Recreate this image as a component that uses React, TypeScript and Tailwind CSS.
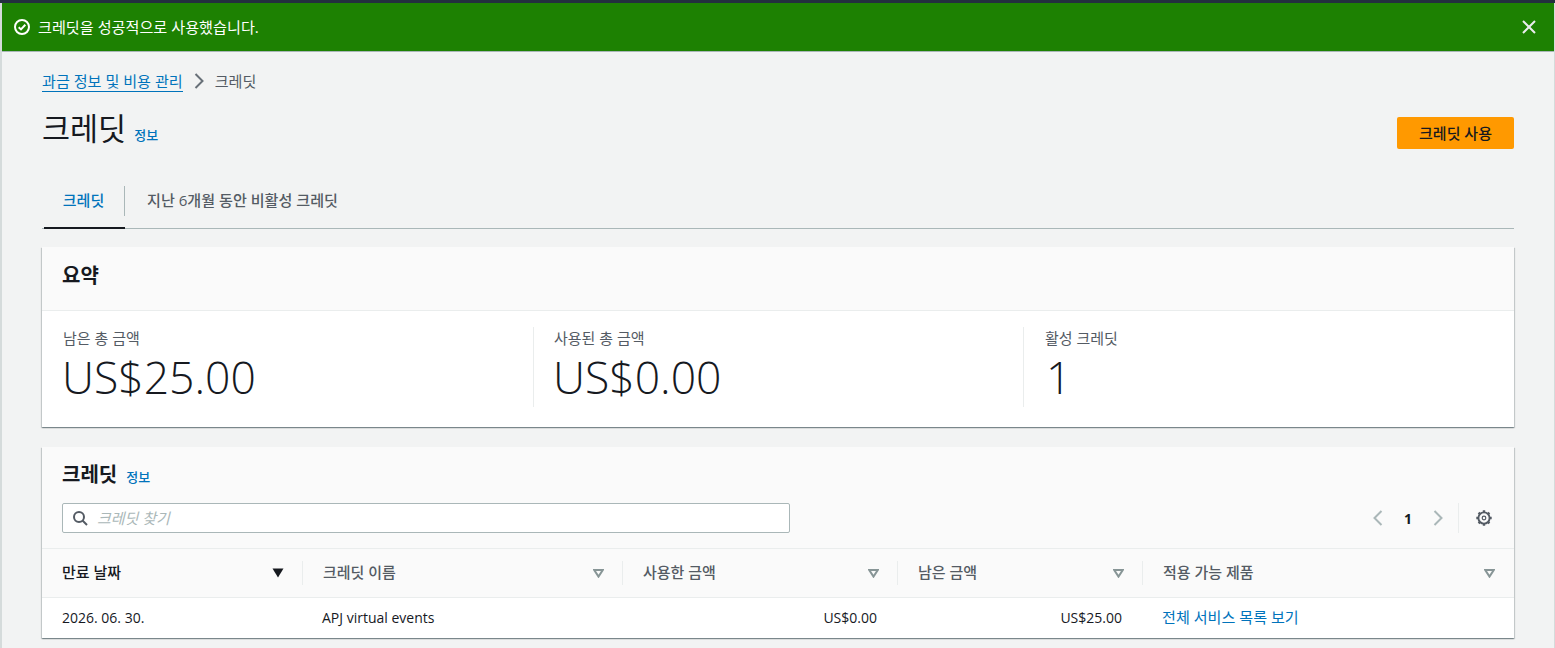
import React from "react";

const font = "font-['Open_Sans','Noto_Sans_CJK_KR',sans-serif]";

function SortIcon({ active }: { active?: boolean }) {
  if (active) {
    return (
      <svg width="12" height="10" viewBox="0 0 12 10" className="shrink-0">
        <path d="M0.5 0.5H11.5L6 9.5Z" fill="#16191f" />
      </svg>
    );
  }
  return (
    <svg width="11" height="9" viewBox="0 0 11 9" className="shrink-0">
      <path d="M1.2 1H9.8L5.5 7.6Z" fill="none" stroke="#879596" strokeWidth="2" />
    </svg>
  );
}

function Chevron({ dir, color }: { dir: "left" | "right"; color: string }) {
  return (
    <svg width="10" height="16" viewBox="0 0 10 16" fill="none" stroke={color} strokeWidth="2" className="shrink-0">
      <path d={dir === "right" ? "M1.5 1L8.5 8L1.5 15" : "M8.5 1L1.5 8L8.5 15"} />
    </svg>
  );
}

function Gear() {
  return (
    <svg width="16" height="16" viewBox="0 0 16 16" fill="none" stroke="#545b64" className="shrink-0 ml-[17px] mr-[2px]">
      <circle cx="8" cy="8" r="5.6" strokeWidth="1.9" />
      <circle cx="8" cy="8" r="1.8" strokeWidth="1.2" />
      <path
        d="M8 0.3V2.4M8 13.6V15.7M0.3 8H2.4M13.6 8H15.7M2.6 2.6L4 4M12 12L13.4 13.4M13.4 2.6L12 4M4 12L2.6 13.4"
        strokeWidth="2.4"
      />
    </svg>
  );
}

function Th({ label, w, active, last }: { label: string; w: string; active?: boolean; last?: boolean }) {
  return (
    <div className={`${w} h-full flex items-center relative pl-[20px] pr-[19px] ${last ? "grow" : ""}`}>
      <span className={`grow text-[15px] font-medium pb-[2px] ${active ? "text-[#16191f]" : "text-[#545b64]"}`}>{label}</span>
      <SortIcon active={active} />
      {!last && <span className="absolute right-0 top-[12px] h-[24px] w-px bg-[#eaeded]" />}
    </div>
  );
}

const cardShadow = "shadow-[0_1px_1px_0_rgba(0,28,36,0.3),1px_1px_1px_0_rgba(0,28,36,0.15),-1px_1px_1px_0_rgba(0,28,36,0.15)]";

export default function App() {
  return (
    <div className={`${font} w-[1555px] h-[648px] overflow-hidden bg-[#f2f3f3] flex flex-col text-[#16191f]`}>
      <div className="h-[3px] bg-[#232f3e] shrink-0" />
      <div className="flex grow min-h-0 border-l-2 border-l-[#d5dbdb] border-r border-r-[#d5dbdb]">
        <div className="grow min-w-0 flex flex-col">
          <div className="h-[49px] shrink-0 bg-[#1d8102] border-b border-b-[#aab7b8] flex items-center pl-[12px] pr-[17px] text-white">
            <svg width="16" height="16" viewBox="0 0 16 16" fill="none" stroke="#fff" strokeWidth="2" className="shrink-0">
              <circle cx="8" cy="8" r="7" />
              <path d="M4.7 8.2L7 10.4L11.3 5.8" />
            </svg>
            <span className="ml-[8px] grow text-[15.15px] leading-[20px]">크레딧을 성공적으로 사용했습니다.</span>
            <svg width="14" height="14" viewBox="0 0 14 14" fill="none" stroke="#eaeded" strokeWidth="2" className="shrink-0 mr-[1px]">
              <path d="M1 1L13 13M13 1L1 13" />
            </svg>
          </div>

          <div className="pl-[40px] pr-[40px] grow min-h-0 flex flex-col">
            <div className="flex items-center h-[20px] mt-[19px] text-[15.1px]">
              <span className="text-[#0073bb] border-b border-b-[#0073bb] leading-[20px]">과금 정보 및 비용 관리</span>
              <span className="ml-[11px]"><Chevron dir="right" color="#687078" /></span>
              <span className="text-[#545b64] ml-[11px]">크레딧</span>
            </div>

            <div className="flex items-start justify-between mt-[13px] h-[48px] shrink-0">
              <div className="flex items-baseline">
                <h1 className="text-[30.5px] leading-[48px] font-normal">크레딧</h1>
                <span className="text-[13px] text-[#0073bb] ml-[8px] font-medium">정보</span>
              </div>
              <button className="mt-[13px] w-[117px] h-[32px] bg-[#ff9900] rounded-[2px] text-[15px] font-medium text-[#16191f]">크레딧 사용</button>
            </div>

            <div className="flex h-[49px] mt-[28px] border-b border-b-[#aab7b8] shrink-0">
              <div className="ml-[2px] w-[81px] relative flex items-center justify-center pb-[7px] text-[#0073bb] text-[15px] font-medium">
                <span className="-ml-[2px]">크레딧</span>
                <span className="absolute left-0 right-0 -bottom-px h-[2px] bg-[#16191f]" />
                <span className="absolute right-0 top-[6px] h-[30px] w-px bg-[#aab7b8]" />
              </div>
              <div className="pl-[22px] pb-[7px] flex items-center text-[#545b64] text-[15.1px] font-medium">지난 6개월 동안 비활성 크레딧</div>
            </div>

            <section className={`mt-[18px] bg-white ${cardShadow} shrink-0`}>
              <div className="h-[64px] bg-[#fafafa] border-b border-b-[#eaeded] flex items-center px-[20px] pb-[6px]">
                <h2 className="text-[20px] font-bold leading-[22px]">요약</h2>
              </div>
              <div className="flex h-[116px] pt-[16px]">
                <div className="w-[492px] h-[80px] border-r border-r-[#eaeded] pl-[21px]">
                  <div className="text-[15px] leading-[22px] text-[#545b64]">남은 총 금액</div>
                  <div className="text-[44.5px] leading-[56px] font-light text-[#16191f] -ml-px">US$25.00</div>
                </div>
                <div className="w-[490px] h-[80px] border-r border-r-[#eaeded] pl-[20px]">
                  <div className="text-[15px] leading-[22px] text-[#545b64]">사용된 총 금액</div>
                  <div className="text-[44.5px] leading-[56px] font-light text-[#16191f] -ml-px">US$0.00</div>
                </div>
                <div className="pl-[21px]">
                  <div className="text-[15px] leading-[22px] text-[#545b64]">활성 크레딧</div>
                  <div className="text-[44.5px] leading-[56px] font-light text-[#16191f] ml-px">1</div>
                </div>
              </div>
            </section>

            <section className={`mt-[20px] bg-white ${cardShadow} shrink-0`}>
              <div className="bg-[#fafafa] h-[102px] border-b border-b-[#eaeded] px-[20px] pt-[16px]">
                <div className="flex items-baseline h-[24px]">
                  <h2 className="text-[20px] font-bold leading-[24px]">크레딧</h2>
                  <span className="text-[13px] text-[#0073bb] font-medium ml-[9px]">정보</span>
                </div>
                <div className="flex items-center justify-between mt-[16px]">
                  <div className="w-[728px] h-[30px] bg-white border border-[#aab7b8] rounded-[2px] flex items-center pl-[9px]">
                    <svg width="16" height="16" viewBox="0 0 16 16" fill="none" stroke="#545b64" strokeWidth="2" className="shrink-0">
                      <circle cx="7" cy="7" r="5" />
                      <path d="M10.5 10.5L15 15" />
                    </svg>
                    <span className="ml-[9px] text-[15px] italic text-[#aab7b8]">크레딧 찾기</span>
                  </div>
                  <div className="flex items-center h-[30px]">
                    <Chevron dir="left" color="#aab7b8" />
                    <span className="w-[50px] text-center text-[14px] font-bold">1</span>
                    <Chevron dir="right" color="#aab7b8" />
                    <span className="w-px h-[30px] bg-[#eaeded] ml-[15px]" />
                    <Gear />
                  </div>
                </div>
              </div>
              <div className="flex h-[49px] bg-[#fafafa] border-b border-b-[#eaeded]">
                <Th label="만료 날짜" w="w-[261px]" active />
                <Th label="크레딧 이름" w="w-[320px]" />
                <Th label="사용한 금액" w="w-[275px]" />
                <Th label="남은 금액" w="w-[245px]" />
                <Th label="적용 가능 제품" w="w-[371px]" last />
              </div>
              <div className="flex h-[40px] items-center pb-[2px] text-[14px] text-[#16191f]">
                <div className="w-[261px] pl-[20px]">2026. 06. 30.</div>
                <div className="w-[320px] pl-[19px]">APJ virtual events</div>
                <div className="w-[275px] pr-[21px] text-right">US$0.00</div>
                <div className="w-[245px] pr-[21px] text-right">US$25.00</div>
                <div className="pl-[19px] text-[15.1px] text-[#0073bb]">전체 서비스 목록 보기</div>
              </div>
            </section>
          </div>
        </div>
      </div>
    </div>
  );
}
